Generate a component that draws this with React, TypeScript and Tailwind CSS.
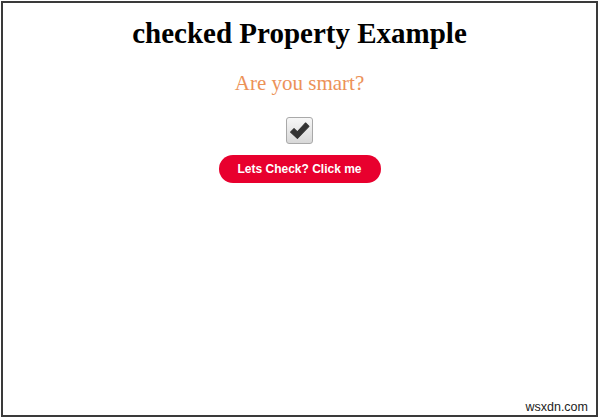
import React from "react";

export default function App() {
  return (
    <div className="w-[600px] h-[419px] bg-white relative overflow-hidden">
      <div className="ml-[1px] mt-[1px] w-[597px] h-[416px] border-2 border-[#3a3a3a] flex flex-col items-center">
        <h1 className="mt-[14px] text-[29px] leading-[32px] font-bold text-black font-['Liberation_Serif','Times_New_Roman',serif]">
          checked Property Example
        </h1>
        <p className="mt-[22px] text-[21px] leading-[24px] text-[#ec9258] font-['Liberation_Serif','Times_New_Roman',serif]">
          Are you smart?
        </p>
        <div className="mt-[22px] w-[27px] h-[27px] rounded-[3px] border border-[#a9a9a9] bg-gradient-to-b from-[#f7f7f7] to-[#d8d8d8] flex items-center justify-center">
          <svg width="21" height="19" viewBox="0 0 20 18">
            <path
              d="M1.5 10.5 L4.8 7.2 L8 10.4 L15.8 1.8 L19 5 L8 16.5 Z"
              fill="#333"
              stroke="#333"
              strokeWidth="1"
              strokeLinejoin="round"
            />
          </svg>
        </div>
        <button className="mt-[11px] w-[162px] h-[28px] rounded-full bg-[#e8002e] text-white text-[12px] font-bold flex items-center justify-center font-['Liberation_Sans',Arial,sans-serif]">
          Lets Check? Click me
        </button>
      </div>
      <div className="absolute right-[12px] top-[399px] text-[12.5px] leading-[16px] text-[#222] font-['Liberation_Sans',Arial,sans-serif]">
        wsxdn.com
      </div>
    </div>
  );
}
